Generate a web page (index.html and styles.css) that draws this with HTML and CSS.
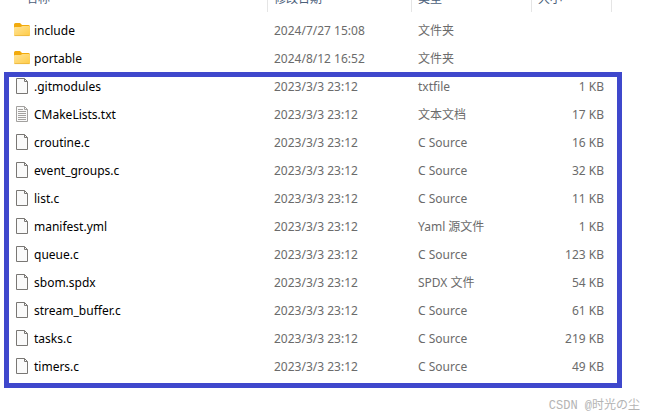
FILE: index.html
```
<!DOCTYPE html>
<html lang="zh-CN">
<head>
  <meta charset="UTF-8">
  <meta name="viewport" content="width=device-width, initial-scale=1.0">
  <title>文件列表</title>
  <link rel="stylesheet" href="styles.css">
</head>
<body>
  <svg class="sprites" aria-hidden="true">
    <defs>
      <linearGradient id="folderFill" x1="0" y1="0" x2="1" y2="1">
        <stop offset="0" stop-color="#ffe499"/>
        <stop offset="1" stop-color="#ffcb45"/>
      </linearGradient>
      <symbol id="icon-folder" viewBox="0 0 16 16">
        <path d="M0 2.500A1.500 1.500 0 0 1 1.500 1h4.500L8 3H14.500A1.500 1.500 0 0 1 16 4.500V9H0z" fill="#f2aa0c"/>
        <path d="M0 6a1 1 0 0 1 1-1h5.500L8.500 4H15a1 1 0 0 1 1 1v8a1 1 0 0 1-1 1H1a1 1 0 0 1-1-1z" fill="url(#folderFill)"/>
        <path d="M.5 13.600h15" stroke="#e9b33a" stroke-width=".8"/>
      </symbol>
      <symbol id="icon-file" viewBox="0 0 16 16">
        <path d="M2.500.5h8l3 3v12h-11z" fill="#fafafa" stroke="#797774"/>
        <path d="M10.500.5v3h3" fill="none" stroke="#797774"/>
      </symbol>
      <symbol id="icon-text" viewBox="0 0 16 16">
        <path d="M2.500.5h8l3 3v12h-11z" fill="#fafafa" stroke="#a3a19f"/>
        <path d="M10.500.5v3h3" fill="none" stroke="#a3a19f"/>
        <path d="M4 3.500h5M4 5.500h8M4 7.500h8M4 9.500h8M4 11.500h8M4 13.500h8" stroke="#a3a19f"/>
      </symbol>
    </defs>
  </svg>

  <main class="explorer">
    <table class="files">
      <thead>
        <tr>
          <th class="col-name"><span>名称</span></th>
          <th class="col-date"><span>修改日期</span></th>
          <th class="col-type"><span>类型</span></th>
          <th class="col-size"><span>大小</span></th>
        </tr>
      </thead>
      <tbody id="folders"></tbody>
      <tbody id="sources" class="marked"></tbody>
    </table>
  </main>
  <footer class="watermark">CSDN @时光の尘</footer>

  <script src="script.js"></script>
</body>
</html>
```
FILE: styles.css
```
body {
  margin: 0;
  background: #fff;
  font-family: "Noto Sans", "Noto Sans CJK SC", sans-serif;
  font-size: 12px;
  line-height: 16px;
  color: #6b6b6b;
  overflow: hidden;
}

.sprites {
  position: absolute;
  width: 0;
  height: 0;
}

/* the list is scrolled a little, so the header is cut at the top */
.explorer {
  margin: -16px 34px 0 0;
}

.files {
  width: 100%;
  table-layout: fixed;
  border-collapse: collapse;
}

th {
  padding: 0 0 4px;
  font-weight: normal;
  text-align: left;
  color: #4c607a;
}

th span {
  display: block;
  padding: 2px 0 0 6px;
  border-right: 1px solid #e5e5e5;
  line-height: 26px;
}

.col-name span {
  padding-left: 26px;
}

.col-date {
  width: 144px;
}

.col-type {
  width: 120px;
}

.col-size {
  width: 80px;
}

td {
  height: 26px;
  padding: 2px 6px 0;
  white-space: nowrap;
}

.name {
  height: 28px;
  padding: 0 6px 0 14px;
  color: #000;
}

.name div {
  display: flex;
  align-items: center;
  gap: 4px;
}

.name span {
  padding-top: 2px;
}

.name svg {
  width: 16px;
  height: 16px;
}

.size {
  padding-right: 8px;
  text-align: right;
}

.marked {
  position: relative;
}

.marked::after {
  content: '';
  position: absolute;
  top: 0;
  right: -10px;
  bottom: -8px;
  left: 4px;
  border: 5px solid #3f48cc;
}

.watermark {
  margin-top: 18px;
  padding-right: 6px;
  font-family: "Liberation Mono", "Noto Sans CJK SC", monospace;
  text-align: right;
  color: #b4b4b4;
}
```
FILE: script.js
```
const folders = [
  { name: 'include', date: '2024/7/27 15:08', type: '文件夹', size: '', icon: 'folder' },
  { name: 'portable', date: '2024/8/12 16:52', type: '文件夹', size: '', icon: 'folder' }
];

const sources = [
  { name: '.gitmodules', date: '2023/3/3 23:12', type: 'txtfile', size: '1 KB', icon: 'file' },
  { name: 'CMakeLists.txt', date: '2023/3/3 23:12', type: '文本文档', size: '17 KB', icon: 'text' },
  { name: 'croutine.c', date: '2023/3/3 23:12', type: 'C Source', size: '16 KB', icon: 'file' },
  { name: 'event_groups.c', date: '2023/3/3 23:12', type: 'C Source', size: '32 KB', icon: 'file' },
  { name: 'list.c', date: '2023/3/3 23:12', type: 'C Source', size: '11 KB', icon: 'file' },
  { name: 'manifest.yml', date: '2023/3/3 23:12', type: 'Yaml 源文件', size: '1 KB', icon: 'file' },
  { name: 'queue.c', date: '2023/3/3 23:12', type: 'C Source', size: '123 KB', icon: 'file' },
  { name: 'sbom.spdx', date: '2023/3/3 23:12', type: 'SPDX 文件', size: '54 KB', icon: 'file' },
  { name: 'stream_buffer.c', date: '2023/3/3 23:12', type: 'C Source', size: '61 KB', icon: 'file' },
  { name: 'tasks.c', date: '2023/3/3 23:12', type: 'C Source', size: '219 KB', icon: 'file' },
  { name: 'timers.c', date: '2023/3/3 23:12', type: 'C Source', size: '49 KB', icon: 'file' }
];

function renderRows(id, items) {
  document.getElementById(id).innerHTML = items.map(({ name, date, type, size, icon }) => `
    <tr>
      <td class="name"><div><svg aria-hidden="true"><use href="#icon-${icon}"/></svg><span>${name}</span></div></td>
      <td>${date}</td>
      <td>${type}</td>
      <td class="size">${size}</td>
    </tr>`).join('');
}

renderRows('folders', folders);
renderRows('sources', sources);
```
